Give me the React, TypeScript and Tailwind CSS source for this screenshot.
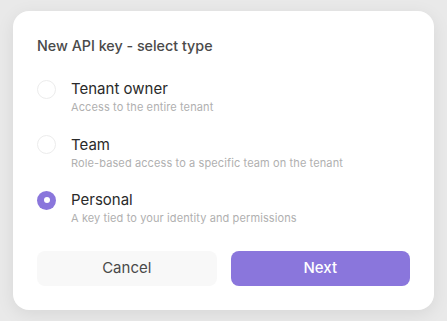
const options = [
  { id: "owner", label: "Tenant owner", desc: "Access to the entire tenant" },
  { id: "team", label: "Team", desc: "Role-based access to a specific team on the tenant" },
  { id: "personal", label: "Personal", desc: "A key tied to your identity and permissions" },
];

function Radio({ checked }: { checked: boolean }) {
  if (checked) {
    return (
      <span className="flex h-[19px] w-[19px] shrink-0 items-center justify-center rounded-full bg-[#8a76dc]">
        <span className="h-[6px] w-[6px] rounded-full bg-white" />
      </span>
    );
  }
  return <span className="h-[19px] w-[19px] shrink-0 rounded-full border border-[#ececec] bg-white" />;
}

export default function App() {
  const selected = "personal";
  return (
    <div className="h-[321px] w-[447px] bg-[#e9e9e9] pl-[13px] pt-[11px] font-['Inter',sans-serif]">
      <div className="flex w-[421px] flex-col rounded-[16px] bg-white px-6 pb-6 pt-[25px] shadow-[0_4px_18px_rgba(0,0,0,0.08)]">
        <h2 className="text-[14.3px] font-medium leading-5 text-[#4a4a4a]">New API key - select type</h2>
        <div className="mt-[23px] flex flex-col gap-[19.5px]">
          {options.map((o) => (
            <div key={o.id} className="flex gap-[15px]">
              <div className="flex h-5 items-center">
                <Radio checked={o.id === selected} />
              </div>
              <div className="flex flex-col">
                <span className="text-[15px] leading-5 text-[#2a2a2a]">{o.label}</span>
                <span className="text-[11px] leading-4 tracking-[0.01em] text-[#b0b0b0]">{o.desc}</span>
              </div>
            </div>
          ))}
        </div>
        <div className="mt-[25px] flex gap-[14px]">
          <button className="h-[35px] flex-1 rounded-[8px] bg-[#f8f8f8] text-[15px] text-[#4a4a4a]">Cancel</button>
          <button className="h-[35px] flex-1 rounded-[8px] bg-[#8a76dc] text-[15px] font-medium text-white">Next</button>
        </div>
      </div>
    </div>
  );
}
